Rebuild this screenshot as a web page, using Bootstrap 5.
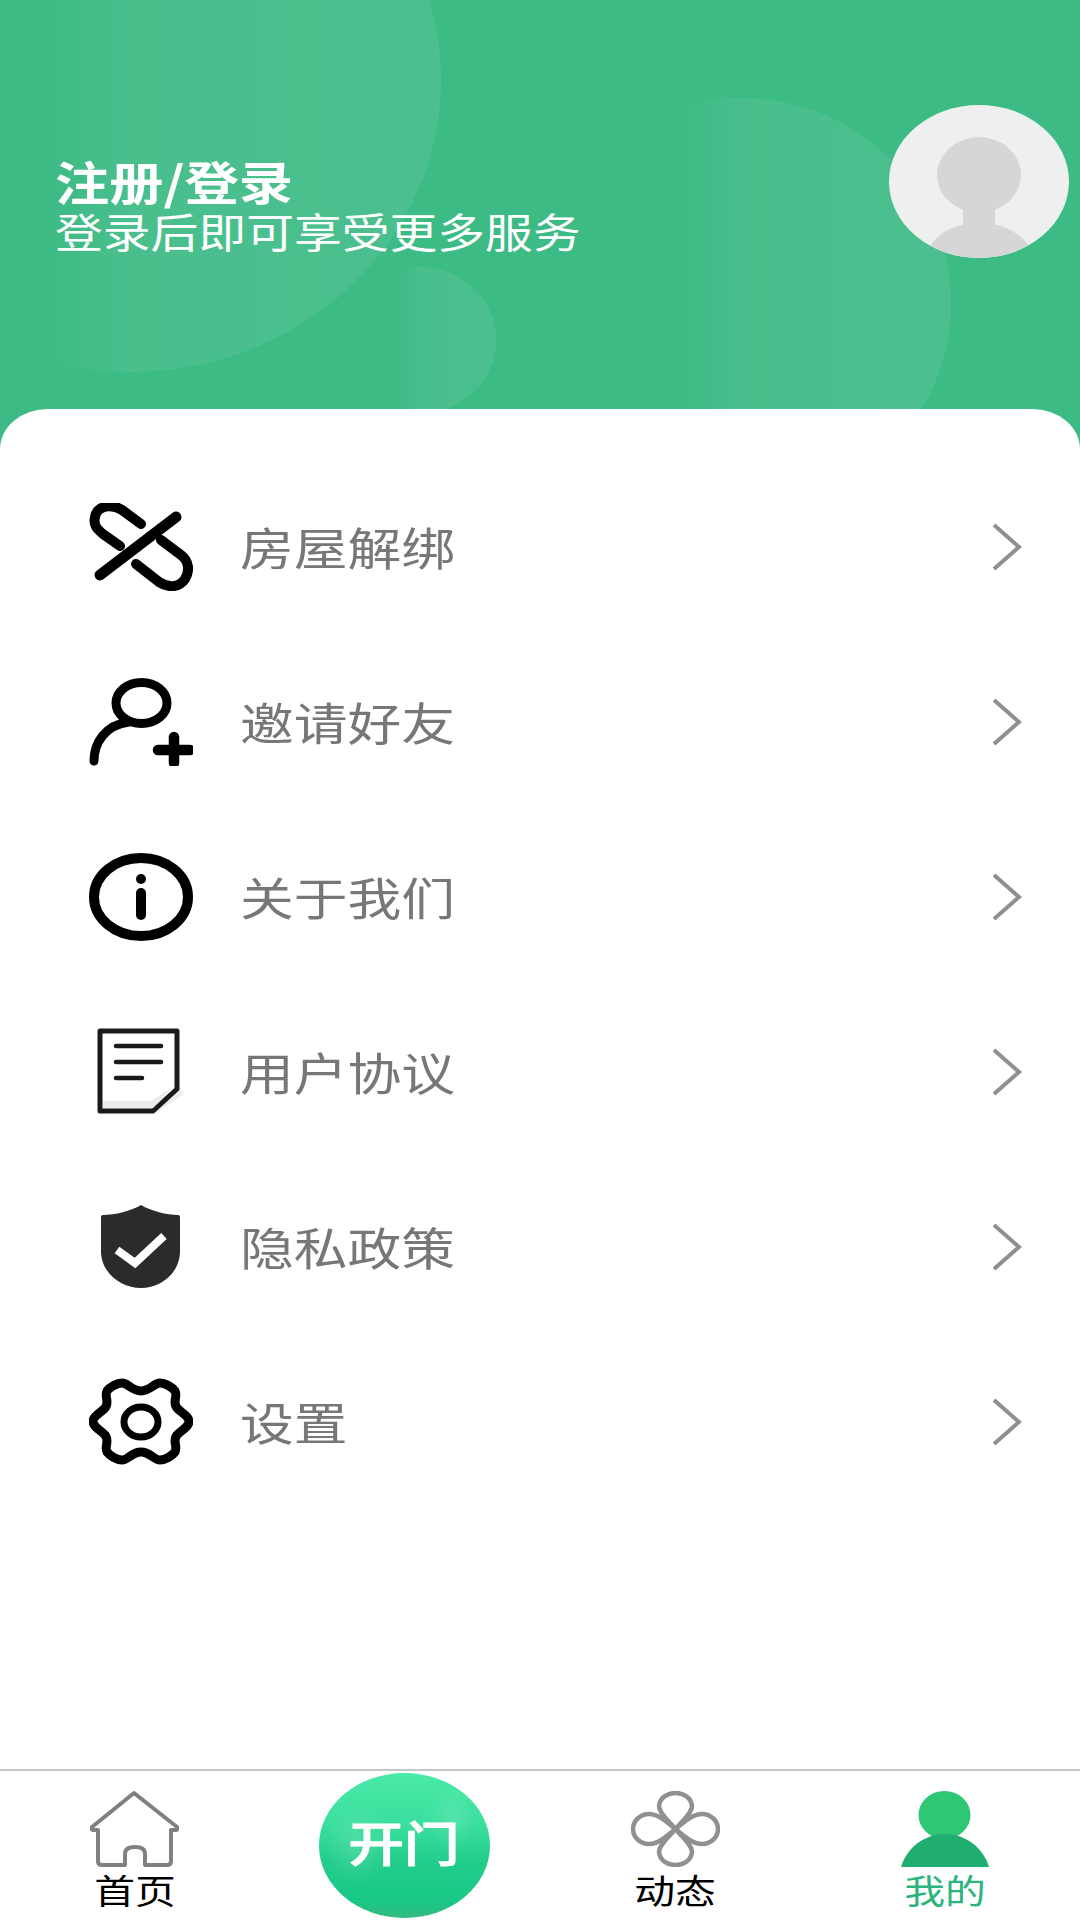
<!DOCTYPE html>
<html lang="zh">
  <head>
    <meta charset="UTF-8" />
    <title>我的</title>
    <link href="https://cdn.jsdelivr.net/npm/bootstrap@5.3.2/dist/css/bootstrap.min.css" rel="stylesheet" />
    <style>
      body {
        font-family: "Noto Sans CJK SC", "Liberation Sans", sans-serif;
        background-color: #fff;
      }
      .hero {
        height: 457px;
        padding: 0 11px 48px 55px;
        background-color: #3dbb85;
      }
      .hero-bg {
        position: absolute;
        top: 0;
        left: 0;
      }
      .hero-title,
      .hero-sub {
        transform: scaleX(1.18);
        transform-origin: left center;
      }
      .hero-title {
        font-size: 46px;
        font-weight: 700;
        line-height: 50px;
        white-space: nowrap;
      }
      .hero-sub {
        margin-top: 2px;
        font-size: 40.5px;
        line-height: 48px;
        white-space: nowrap;
      }
      .avatar-pic {
        width: 180px;
        height: 153px;
        margin-top: 105px;
      }
      .panel {
        margin-top: -48px;
        padding: 50px 58px 0 89px;
        background-color: #fff;
        border-radius: 48px 48px 0 0 / 40px 40px 0 0;
      }
      .menu-row {
        height: 175px;
      }
      .menu-icon {
        width: 104px;
        height: 88px;
        margin-right: 47px;
      }
      .menu-label {
        font-size: 45px;
        color: #777;
        transform: scaleX(1.195);
        transform-origin: left center;
      }
      .menu-arrow {
        width: 30px;
        height: 48px;
      }
      .tabbar {
        height: 151px;
        border-top: 2px solid #c6c6c6;
      }
      .tab-item {
        width: 270px;
      }
      .tab-icon {
        width: 89px;
        height: 76px;
        margin-top: 20px;
      }
      .tab-home {
        margin-left: -2px;
      }
      .tab-label {
        font-size: 34px;
        line-height: 46px;
        color: #000;
        transform: scaleX(1.2);
      }
      .tab-label-on {
        color: #2bb47b;
      }
      .open-btn {
        width: 171px;
        height: 145px;
        margin: 2px 0 0 -2px;
        color: #fff;
        font-size: 47px;
        font-weight: 500;
        -webkit-text-stroke: 1.2px #fff;
        background:
          radial-gradient(ellipse 32px 40px at 22% 50%, rgba(255, 255, 255, 0.14), rgba(255, 255, 255, 0) 100%),
          radial-gradient(ellipse 24px 30px at 78% 32%, rgba(255, 255, 255, 0.12), rgba(255, 255, 255, 0) 100%),
          linear-gradient(180deg, #4aeaa8 0%, #3bdf9d 35%, #22cd8b 62%, #18c884 88%, #35b97f 100%);
      }
      .open-btn span {
        padding-bottom: 8px;
        transform: scaleX(1.18);
      }
    </style>
  </head>

  <body>
    <div class="d-flex flex-column min-vh-100">
      <header class="hero position-relative d-flex align-items-center justify-content-between text-white overflow-hidden">
        <svg class="hero-bg" width="1080" height="457" viewBox="0 0 1080 457">
          <defs>
            <linearGradient id="fadeA" x1="0" x2="1" y1="0" y2="0">
              <stop offset="0.36" stop-color="#fff" stop-opacity="0" />
              <stop offset="0.5" stop-color="#fff" stop-opacity="0.06" />
              <stop offset="1" stop-color="#fff" stop-opacity="0.075" />
            </linearGradient>
          </defs>
          <ellipse cx="130" cy="80" rx="311" ry="292" fill="url(#fadeA)" />
          <ellipse cx="420" cy="340" rx="76" ry="73" fill="url(#fadeA)" />
          <ellipse cx="742" cy="304" rx="209" ry="206" fill="url(#fadeA)" />
        </svg>
        <div class="position-relative">
          <div class="hero-title">注册/登录</div>
          <div class="hero-sub">登录后即可享受更多服务</div>
        </div>
        <svg class="avatar-pic position-relative align-self-start" viewBox="0 0 180 153">
          <defs>
            <clipPath id="avatarClip"><ellipse cx="90" cy="76.5" rx="90" ry="76.5" /></clipPath>
          </defs>
          <ellipse cx="90" cy="76.5" rx="90" ry="76.5" fill="#eef0f0" />
          <g clip-path="url(#avatarClip)" fill="#d6d6d6">
            <ellipse cx="90" cy="70" rx="42" ry="38" />
            <rect x="74" y="100" width="32" height="24" />
            <path d="M36 153 C44 126 68 119 90 117 C112 119 136 126 146 153Z" />
          </g>
        </svg>
      </header>

      <main class="panel position-relative flex-grow-1">
        <div class="menu-row d-flex align-items-center">
          <svg class="menu-icon" viewBox="0 0 104 88" fill="none" stroke="#000" stroke-width="10" stroke-linecap="round">
            <path d="M11 72 L87 14" stroke-width="11" />
            <path d="M52 21 L33 7 C22 0 8 3 6 14 C4 22 8 26 14 31 L31 43" />
            <path d="M72 37 L92 52 C100 58 101 68 96 76 C90 85 79 85 70 79 L47 61" />
          </svg>
          <span class="menu-label">房屋解绑</span>
          <svg class="menu-arrow ms-auto" viewBox="0 0 30 48" fill="none" stroke="#8f8f8f" stroke-width="4"><path d="M2 2 L27 24 L2 46" /></svg>
        </div>
        <div class="menu-row d-flex align-items-center">
          <svg class="menu-icon" viewBox="0 0 104 88" fill="none" stroke="#000" stroke-width="9" stroke-linecap="round">
            <ellipse cx="52.5" cy="25" rx="25.5" ry="20.5" />
            <path d="M40 44 C16 47 5 65 5 83" />
            <path d="M69 72 H101 M85 59 V85" stroke-width="10.5" />
          </svg>
          <span class="menu-label">邀请好友</span>
          <svg class="menu-arrow ms-auto" viewBox="0 0 30 48" fill="none" stroke="#8f8f8f" stroke-width="4"><path d="M2 2 L27 24 L2 46" /></svg>
        </div>
        <div class="menu-row d-flex align-items-center">
          <svg class="menu-icon" viewBox="0 0 104 88" fill="none" stroke="#000" stroke-width="10" stroke-linecap="round">
            <ellipse cx="52" cy="44" rx="47" ry="39" />
            <path d="M52 40 V62" />
            <circle cx="52" cy="26" r="5" fill="#000" stroke="none" />
          </svg>
          <span class="menu-label">关于我们</span>
          <svg class="menu-arrow ms-auto" viewBox="0 0 30 48" fill="none" stroke="#8f8f8f" stroke-width="4"><path d="M2 2 L27 24 L2 46" /></svg>
        </div>
        <div class="menu-row d-flex align-items-center">
          <svg class="menu-icon" viewBox="0 0 104 88" fill="none" stroke="#1a1a1a" stroke-linecap="round" stroke-linejoin="round">
            <path d="M64 87 L95 66 L90 58 L64 81Z" fill="#ececec" stroke="none" />
            <path d="M11 3 H88 V61 L64 83 H11Z" fill="#fff" stroke-width="5" />
            <path d="M14 73 H62 L85 58 L64 80 H14Z" fill="#ececec" stroke="none" />
            <path d="M27 18 H72 M27 34 H72 M27 50 H53" stroke-width="4.5" />
          </svg>
          <span class="menu-label">用户协议</span>
          <svg class="menu-arrow ms-auto" viewBox="0 0 30 48" fill="none" stroke="#8f8f8f" stroke-width="4"><path d="M2 2 L27 24 L2 46" /></svg>
        </div>
        <div class="menu-row d-flex align-items-center">
          <svg class="menu-icon" viewBox="0 0 104 88">
            <path d="M52 2 C42 8 26 12 14 12 Q12 12 12 14 L12 48 C12 70 32 85 52 85 C72 85 91 70 91 48 L91 14 Q91 12 89 12 C78 12 62 8 52 2Z" fill="#2b2b2b" />
            <path d="M28 47 L46 60 L75 33" fill="none" stroke="#fff" stroke-width="8" />
          </svg>
          <span class="menu-label">隐私政策</span>
          <svg class="menu-arrow ms-auto" viewBox="0 0 30 48" fill="none" stroke="#8f8f8f" stroke-width="4"><path d="M2 2 L27 24 L2 46" /></svg>
        </div>
        <div class="menu-row d-flex align-items-center">
          <svg class="menu-icon" viewBox="0 0 104 88" fill="none" stroke="#000" stroke-width="9">
            <path d="M33 5 C39 5 43 13 52 13 C61 13 65 5 71 5 C76 5 83 9 86 13 C89 19 83 24 88 30 C91 34 100 38 100 43.5 C100 49 91 53 88 57 C83 63 89 68 86 74 C83 78 76 82 71 82 C65 82 61 74 52 74 C43 74 39 82 33 82 C28 82 21 78 18 74 C15 68 21 63 16 57 C13 53 4 49 4 43.5 C4 38 13 34 16 30 C21 24 15 19 18 13 C21 9 28 5 33 5Z" />
            <ellipse cx="52" cy="44" rx="17" ry="15" stroke-width="7" />
          </svg>
          <span class="menu-label">设置</span>
          <svg class="menu-arrow ms-auto" viewBox="0 0 30 48" fill="none" stroke="#8f8f8f" stroke-width="4"><path d="M2 2 L27 24 L2 46" /></svg>
        </div>
      </main>

      <nav class="tabbar d-flex bg-white">
        <div class="tab-item d-flex flex-column align-items-center">
          <svg class="tab-icon tab-home" viewBox="0 0 89 76" fill="none" stroke="#808080" stroke-width="4" stroke-linejoin="round">
            <path d="M44 2 L2 36 Q0 38 3 39 H8 V70 Q8 74 12 74 H35 V63 Q35 56 45 56 Q55 56 55 63 V74 H77 Q81 74 81 70 V39 H86 Q89 38 87 36Z" />
          </svg>
          <span class="tab-label">首页</span>
        </div>
        <div class="tab-item d-flex justify-content-center">
          <div class="open-btn rounded-circle d-flex align-items-center justify-content-center"><span>开门</span></div>
        </div>
        <div class="tab-item d-flex flex-column align-items-center">
          <svg class="tab-icon" viewBox="0 0 89 76" fill="none" stroke="#909090" stroke-width="4.5">
            <path d="M44.5 38 C36 28 28 22 28 15 C29 6 37 2 44.5 2 C52 2 60 6 61 15 C61 22 53 28 44.5 38Z" />
            <path d="M44.5 38 C36 48 28 54 28 61 C29 70 37 74 44.5 74 C52 74 60 70 61 61 C61 54 53 48 44.5 38Z" />
            <path d="M44.5 38 C54 30 62 23 71 23 C80 23 87 30 87 38 C87 46 80 53 71 53 C62 53 54 46 44.5 38Z" />
            <path d="M44.5 38 C35 30 27 23 18 23 C9 23 2 30 2 38 C2 46 9 53 18 53 C27 53 35 46 44.5 38Z" />
          </svg>
          <span class="tab-label">动态</span>
        </div>
        <div class="tab-item d-flex flex-column align-items-center">
          <svg class="tab-icon" viewBox="0 0 89 76">
            <ellipse cx="43.5" cy="24" rx="26" ry="24" fill="#2ec776" />
            <path d="M0 76 C6 56 24 43 44 43 C64 43 82 56 88 76Z" fill="#20ae70" />
          </svg>
          <span class="tab-label tab-label-on">我的</span>
        </div>
      </nav>
    </div>
    <script src="https://cdn.jsdelivr.net/npm/bootstrap@5.3.2/dist/js/bootstrap.bundle.min.js"></script>
  </body>
</html>
